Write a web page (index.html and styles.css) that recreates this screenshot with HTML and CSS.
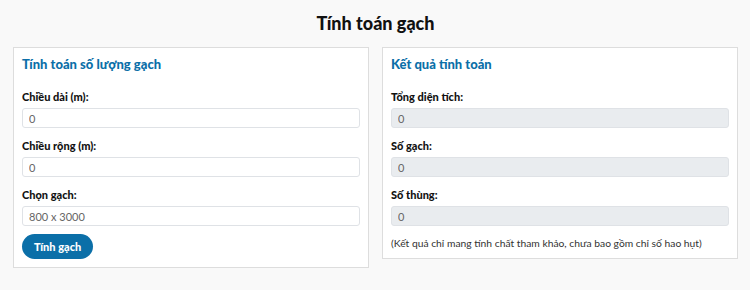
FILE: index.html
```html
<!DOCTYPE html>
<html lang="vi">
<head>
    <meta charset="UTF-8">
    <meta name="viewport" content="width=device-width, initial-scale=1.0">
    <title>Tính toán gạch</title>
    <link rel="stylesheet" href="styles.css">
</head>
<body>
    <h1 class="page-title">Tính toán gạch</h1>

    <div class="calc-wrap">
        <div class="calc-box">
            <h2>Tính toán số lượng gạch</h2>
            <div class="form-group">
                <label for="length">Chiều dài (m):</label>
                <input type="text" id="length" value="0">
            </div>
            <div class="form-group">
                <label for="width">Chiều rộng (m):</label>
                <input type="text" id="width" value="0">
            </div>
            <div class="form-group last">
                <label for="tile">Chọn gạch:</label>
                <input type="text" id="tile" value="800 x 3000">
            </div>
            <button class="calc-button">Tính gạch</button>
        </div>

        <div class="calc-box">
            <h2>Kết quả tính toán</h2>
            <div class="form-group">
                <label for="area">Tổng diện tích:</label>
                <input type="text" id="area" value="0" readonly>
            </div>
            <div class="form-group">
                <label for="count">Số gạch:</label>
                <input type="text" id="count" value="0" readonly>
            </div>
            <div class="form-group last">
                <label for="boxes">Số thùng:</label>
                <input type="text" id="boxes" value="0" readonly>
            </div>
            <p class="note">(Kết quả chỉ mang tính chất tham khảo, chưa bao gồm chỉ số hao hụt)</p>
        </div>
    </div>
</body>
</html>
```

FILE: styles.css
```css
body {
    margin: 0;
    padding: 0 12px 0 13px;
    background-color: #f9f9f9;
    font-family: Lato, "Noto Sans", sans-serif;
    color: #111;
}

.page-title {
    margin: 0;
    padding: 12px 0 13px;
    text-align: center;
    font-size: 18px;
    line-height: 22px;
    font-weight: 900;
}

.calc-wrap {
    display: flex;
    align-items: flex-start;
    gap: 13px;
}

.calc-box {
    flex: 1;
    background-color: #fff;
    border: 1px solid #ddd;
    padding: 8px;
}

.calc-box h2 {
    margin: 0 0 18px;
    font-size: 13px;
    line-height: 16px;
    font-weight: 900;
    color: #0b6fa8;
}

.form-group {
    margin-bottom: 11px;
}

.form-group.last {
    margin-bottom: 8px;
}

.form-group label {
    display: block;
    margin-bottom: 4px;
    font-size: 11px;
    line-height: 14px;
    font-weight: 900;
}

.form-group input {
    display: block;
    box-sizing: border-box;
    width: 100%;
    height: 20px;
    margin: 0;
    padding: 0 6px;
    border: 1px solid #dfe2e6;
    border-radius: 3px;
    background-color: #fff;
    font-family: inherit;
    font-size: 11px;
    color: #666;
}

.form-group input[readonly] {
    background-color: #e9ecef;
}

.calc-button {
    display: block;
    height: 25px;
    padding: 0 12px;
    border: none;
    border-radius: 13px;
    background-color: #0b6fa8;
    color: white;
    font-family: inherit;
    font-size: 11px;
    font-weight: 900;
    cursor: pointer;
}

.note {
    margin: 10px 0 0;
    font-size: 10.3px;
    line-height: 14px;
    color: #333;
}
```
